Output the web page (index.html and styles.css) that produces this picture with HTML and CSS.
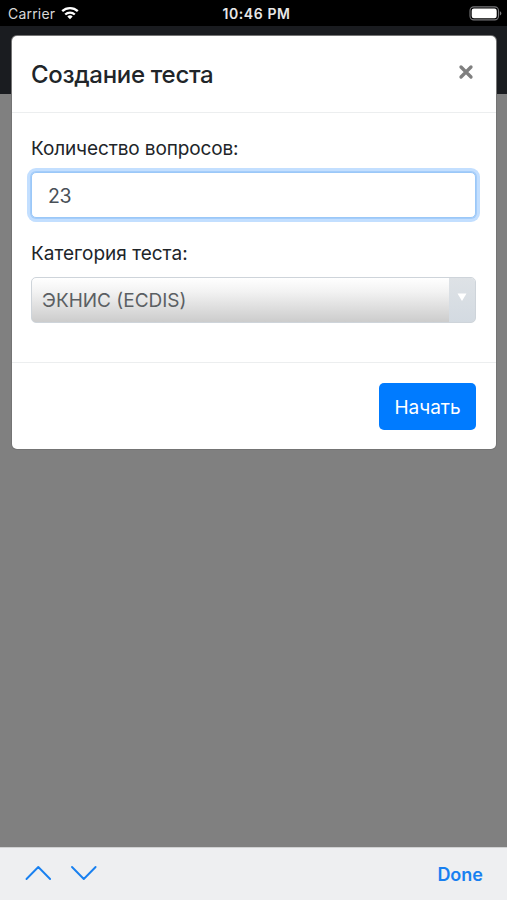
FILE: index.html
```html
<!DOCTYPE html>
<html lang="ru">
<head>
<meta charset="utf-8">
<meta name="viewport" content="width=device-width, initial-scale=1">
<title>Создание теста</title>
<link rel="stylesheet" href="styles.css">
</head>
<body>
<header class="status">
  <div class="carrier"><span class="carrier-name">Carrier</span>
    <svg class="wifi" width="18" height="14" viewBox="0 0 18 14" fill="none" stroke="#fff" stroke-width="2.3">
      <path d="M1.2 5.2a11.2 11.2 0 0 1 15.6 0"/><path d="M4.2 8.5a7 7 0 0 1 9.6 0"/><path d="M6.3 10.6a4 4 0 0 1 5.4 0L9 13.3z" fill="#fff" stroke="none"/>
    </svg>
  </div>
  <span class="clock">10:46 PM</span>
  <svg class="battery" width="33" height="15" viewBox="0 0 33 15">
    <rect x="1" y=".9" width="28.5" height="13" rx="3.8" fill="none" stroke="#77777a" stroke-width="1.1"/>
    <rect x="2.7" y="2.6" width="25" height="9.6" rx="2.2" fill="#fff"/>
    <path d="M30.9 5.2a2.4 2.4 0 0 1 0 4.4z" fill="#77777a"/>
  </svg>
</header>
<main class="page">
  <section class="modal" role="dialog">
    <div class="modal-header">
      <h1 class="title">Создание теста</h1>
      <button class="close" aria-label="Закрыть">
        <svg width="16" height="16" viewBox="0 0 16 16" stroke="#7f7f7f" stroke-width="3.3" stroke-linecap="round"><path d="M3 3l10 10M13 3L3 13"/></svg>
      </button>
    </div>
    <div class="modal-body">
      <label class="label label-count" for="count">Количество вопросов:</label>
      <input class="input" id="count" type="text" value="23">
      <label class="label label-category">Категория теста:</label>
      <div class="select">
        <span class="select-text">ЭКНИС (ECDIS)</span>
        <span class="select-arrow"><svg width="10" height="8" viewBox="0 0 10 8"><path d="M.5.5h9L5 8z" fill="#fff"/></svg></span>
      </div>
    </div>
    <div class="modal-footer"><button class="start">Начать</button></div>
  </section>
</main>
<footer class="toolbar">
  <svg width="72" height="18" viewBox="0 0 72 18" fill="none" stroke="#1880f0" stroke-width="1.9" stroke-linecap="round" stroke-linejoin="round"><path d="M1.5 15L13.3 3l11.8 12M47 3l11.8 12L70.6 3"/></svg>
  <span class="done">Done</span>
</footer>
</body>
</html>
```
FILE: styles.css
```css
* { box-sizing: border-box; }
body {
  margin: 0;
  height: 900px;
  overflow: hidden;
  display: flex;
  flex-direction: column;
  background: #808080;
  font-family: Inter, "Liberation Sans", sans-serif;
  color: #212529;
}
button { border: 0; padding: 0; background: none; font: inherit; }
svg { display: block; flex: none; }
.status {
  height: 26px;
  flex: none;
  background: #000;
  color: #fff;
  display: grid;
  grid-template-columns: 1fr auto 1fr;
  align-items: center;
  padding: 1px 5px 0 8px;
}
.carrier { display: flex; align-items: center; gap: 6px; font-size: 14px; letter-spacing: .2px; color: #d8d8d8; }
.wifi { margin-top: -2px; }
.clock { font-size: 14px; font-weight: 600; letter-spacing: .6px; color: #e8e8e8; margin-left: 3px; }
.battery { justify-self: end; margin-top: -1px; }
.page {
  flex: 1;
  padding: 10px 11px 0 12px;
  background: linear-gradient(#1a1c20 68px, #808080 68px);
}
.modal {
  height: 413px;
  background: #fff;
  border-radius: 5px;
  box-shadow: 0 0 0 1px #747474;
  display: flex;
  flex-direction: column;
}
.modal-header {
  height: 77px;
  border-bottom: 1px solid #eceeef;
  padding: 0 22px 0 19px;
  display: flex;
  justify-content: space-between;
  align-items: center;
}
.title { margin: 2px 0 0; font-size: 24px; line-height: 36px; font-weight: 500; letter-spacing: -.3px; }
.close { margin-top: -4px; }
.modal-body { height: 249px; padding: 21px 20px 0 19px; }
.label { display: block; font-size: 19px; line-height: 30px; }
.label-count { letter-spacing: -.12px; }
.input {
  display: block;
  width: 100%;
  height: 46px;
  margin: 8px 0 21px;
  padding: 2px 16px 0;
  border: 1px solid #9bc8f8;
  border-radius: 5px;
  outline: 0;
  box-shadow: 0 0 0 1px #a5cdfa, 0 0 0 4px #c3dfff;
  color: #495057;
  font: 19.5px Inter, sans-serif;
  letter-spacing: -.3px;
}
.select {
  height: 46px;
  margin-top: 8px;
  border: 1px solid #ced4da;
  border-radius: 5px;
  overflow: hidden;
  display: flex;
  background: linear-gradient(#fff, #f3f3f3 30%, #ccc);
  color: #5b5f63;
}
.select-text { flex: 1; padding-left: 10px; font-size: 19px; line-height: 46px; }
.select-arrow {
  width: 26px;
  display: flex;
  justify-content: center;
  padding-top: 15px;
  background: linear-gradient(#dee2e6, #d3dae1);
}
.modal-footer {
  flex: 1;
  border-top: 1px solid #eceeef;
  padding: 20px 20px 0;
  display: flex;
  justify-content: flex-end;
}
.start {
  width: 97px;
  height: 47px;
  padding-top: 2px;
  border-radius: 5px;
  background: #007bff;
  color: #fff;
  font-size: 19px;
}
.toolbar {
  height: 53px;
  flex: none;
  border-top: 1px solid #d0d1d2;
  background: #eeeff1;
  padding: 0 24px 0 25px;
  display: flex;
  align-items: center;
  justify-content: space-between;
}
.toolbar svg { margin-top: -2px; }
.done { color: #1880f0; font-size: 18px; font-weight: 600; }
```
